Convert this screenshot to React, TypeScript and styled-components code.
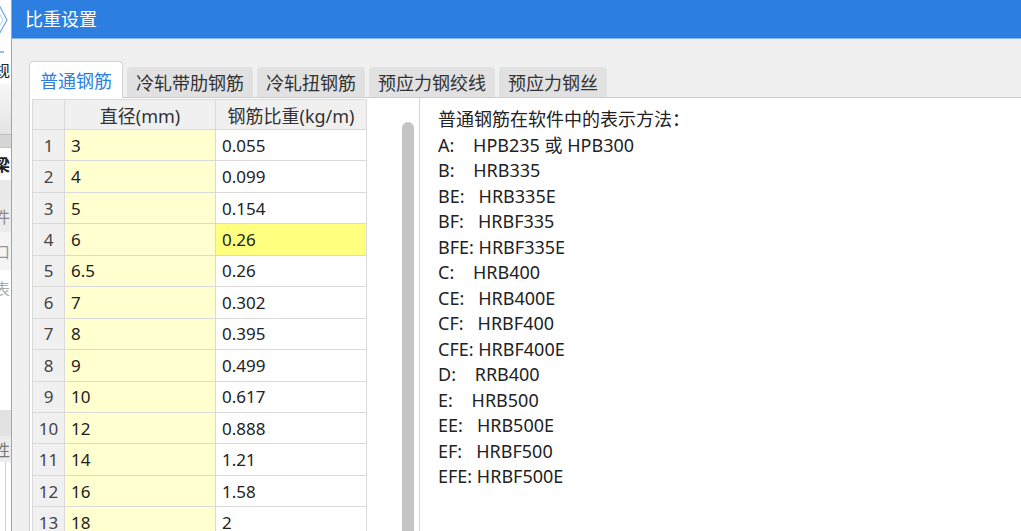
import React from "react";
import styled, { createGlobalStyle } from "styled-components";

const GlobalStyle = createGlobalStyle`
  html, body {
    margin: 0;
    padding: 0;
    overflow: hidden;
    background: #fff;
  }
  body {
    font-family: "Noto Sans", "Noto Sans CJK SC", sans-serif;
  }
`;

const Screen = styled.div`
  display: flex;
  width: 1021px;
  height: 531px;
  overflow: hidden;
`;

// sliver of the window behind the dialog
const BackStrip = styled.div`
  width: 11px;
  flex: none;
  display: flex;
  flex-direction: column;
  overflow: hidden;
  background: #fff;
`;

const StripBlock = styled.div<{ $h: number; $bg: string; $color?: string; $bold?: boolean }>`
  height: ${(p) => p.$h}px;
  flex: none;
  display: flex;
  justify-content: flex-end;
  align-items: center;
  padding-right: 1px;
  overflow: hidden;
  white-space: nowrap;
  background: ${(p) => p.$bg};
  color: ${(p) => p.$color || "#222"};
  font-size: 16px;
  font-weight: ${(p) => (p.$bold ? 700 : 400)};
`;

const StripIcon = styled.svg`
  display: block;
  flex: none;
  margin-right: -1px;
`;

const Dialog = styled.div`
  flex: 1;
  min-width: 0;
  display: flex;
  flex-direction: column;
  background: #f0f0f0;
  border-left: 1px solid #a4a4a4;
`;

const TitleBar = styled.div`
  height: 38px;
  flex: none;
  padding-left: 13px;
  background: #2c7fe0;
  border-bottom: 1px solid #86b6ee;
  color: #fff;
  font-size: 18px;
  line-height: 38px;
`;

const Body = styled.div`
  flex: 1;
  min-height: 0;
  display: flex;
  flex-direction: column;
  padding: 22px 0 0 17px;
`;

const TabRow = styled.div`
  height: 37px;
  flex: none;
  display: flex;
  align-items: flex-end;
  gap: 4px;
`;

const Tab = styled.div<{ $active?: boolean }>`
  position: relative;
  z-index: ${(p) => (p.$active ? 1 : 0)};
  height: ${(p) => (p.$active ? 37 : 30)}px;
  margin-bottom: ${(p) => (p.$active ? 0 : 1)}px;
  padding: 0 ${(p) => (p.$active ? 10 : 9)}px 1px;
  box-sizing: border-box;
  display: flex;
  align-items: center;
  border-radius: 4px 4px 0 0;
  border: ${(p) => (p.$active ? "1px solid #d2d2d2" : "none")};
  border-bottom: none;
  background: ${(p) => (p.$active ? "#fff" : "#e1e1e1")};
  color: ${(p) => (p.$active ? "#2c7fe0" : "#333")};
  font-size: 18px;
  white-space: nowrap;
`;

const Panel = styled.div`
  flex: 1;
  min-height: 0;
  margin-top: -1px;
  display: flex;
  background: #fff;
  border-top: 1px solid #cdcdcd;
  border-left: 1px solid #cdcdcd;
`;

const TableArea = styled.div`
  width: 390px;
  flex: none;
  box-sizing: border-box;
  display: flex;
  padding: 1px 0 0 2px;
  overflow: hidden;
  border-right: 1px solid #d6d6d6;
`;

const Grid = styled.div`
  flex: none;
  align-self: flex-start;
  display: grid;
  grid-template-columns: 32px 151px 151px;
  grid-template-rows: 30px;
  grid-auto-rows: 31.45px;
  border-left: 1px solid #d9d9d9;
  border-top: 1px solid #d9d9d9;
`;

type CellKind = "head" | "num" | "dia" | "val" | "hot";

const cellBg: Record<CellKind, string> = {
  head: "#f0f0f0",
  num: "#f0f0f0",
  dia: "#ffffd0",
  val: "#fff",
  hot: "#ffff80",
};

const Cell = styled.div<{ $kind: CellKind }>`
  box-sizing: border-box;
  display: flex;
  align-items: center;
  justify-content: ${(p) => (p.$kind === "head" || p.$kind === "num" ? "center" : "flex-start")};
  padding-left: ${(p) => (p.$kind === "head" || p.$kind === "num" ? 0 : 6)}px;
  border-right: 1px solid #d9d9d9;
  border-bottom: 1px solid #d9d9d9;
  background: ${(p) => cellBg[p.$kind]};
  color: ${(p) => (p.$kind === "num" ? "#444" : p.$kind === "head" ? "#333" : "#222")};
  font-size: ${(p) => (p.$kind === "head" ? 18 : 17)}px;
  white-space: nowrap;
`;

const Gutter = styled.div`
  flex: 1;
  padding: 23px 0 0 35px;
`;

const Thumb = styled.div`
  width: 12px;
  height: 520px;
  border-radius: 6px;
  background: #c4c4c4;
`;

const RightPane = styled.div`
  flex: 1;
  padding: 9px 0 0 18px;
  color: #222;
  font-size: 18px;
  line-height: 25.5px;
`;

const Line = styled.div`
  white-space: pre;
`;

const tabs = ["普通钢筋", "冷轧带肋钢筋", "冷轧扭钢筋", "预应力钢绞线", "预应力钢丝"];

const rows: [string, string][] = [
  ["3", "0.055"],
  ["4", "0.099"],
  ["5", "0.154"],
  ["6", "0.26"],
  ["6.5", "0.26"],
  ["7", "0.302"],
  ["8", "0.395"],
  ["9", "0.499"],
  ["10", "0.617"],
  ["12", "0.888"],
  ["14", "1.21"],
  ["16", "1.58"],
  ["18", "2"],
  ["20", "2.47"],
];

const HOT_ROW = 3;

const notes = [
  "普通钢筋在软件中的表示方法：",
  "A:    HPB235 或 HPB300",
  "B:    HRB335",
  "BE:   HRB335E",
  "BF:   HRBF335",
  "BFE: HRBF335E",
  "C:    HRB400",
  "CE:   HRB400E",
  "CF:   HRBF400",
  "CFE: HRBF400E",
  "D:    RRB400",
  "E:    HRB500",
  "EE:   HRB500E",
  "EF:   HRBF500",
  "EFE: HRBF500E",
];

const Strip = () => (
  <BackStrip>
    <StripBlock $h={56} $bg="#fff">
      <StripIcon width="11" height="56" viewBox="0 0 11 56">
        <polyline points="-2,3 7,20 -2,36" fill="none" stroke="#6aa6e6" strokeWidth="1.2" />
        <polyline points="-5,6 3,20 -5,33" fill="none" stroke="#a9cbef" strokeWidth="1" />
        <line x1="0" y1="52" x2="4" y2="52" stroke="#4a90e2" strokeWidth="1.2" />
      </StripIcon>
    </StripBlock>
    <StripBlock $h={28} $bg="#fff">规</StripBlock>
    <StripBlock $h={50} $bg="linear-gradient(#f7f7f7, #e4e4e4)" />
    <StripBlock $h={14} $bg="linear-gradient(#bdbdbd 0 1px, #d6d6d6 1px 13px, #c4c4c4 13px)" />
    <StripBlock $h={32} $bg="#fff" $bold>
      梁
    </StripBlock>
    <StripBlock $h={20} $bg="#e9e9e9" />
    <StripBlock $h={32} $bg="#ececec" $color="#8a8a8a">
      件
    </StripBlock>
    <StripBlock $h={38} $bg="#f4f4f4" $color="#999">
      口
    </StripBlock>
    <StripBlock $h={35} $bg="#fff" $color="#aaa">
      表
    </StripBlock>
    <StripBlock $h={105} $bg="#fff" />
    <StripBlock $h={26} $bg="#e2e2e2" />
    <StripBlock $h={26} $bg="#ececec" $color="#777">
      性
    </StripBlock>
    <StripBlock $h={69} $bg="linear-gradient(90deg, #fff 0 5px, #d0d0d0 5px 6px, #fff 6px)" />
  </BackStrip>
);

export default function App() {
  return (
    <>
      <GlobalStyle />
      <Screen>
        <Strip />
        <Dialog>
          <TitleBar>比重设置</TitleBar>
          <Body>
            <TabRow>
              {tabs.map((t, i) => (
                <Tab key={t} $active={i === 0}>
                  {t}
                </Tab>
              ))}
            </TabRow>
            <Panel>
              <TableArea>
                <Grid>
                  <Cell $kind="head" />
                  <Cell $kind="head">直径(mm)</Cell>
                  <Cell $kind="head">钢筋比重(kg/m)</Cell>
                  {rows.map(([d, w], i) => (
                    <React.Fragment key={i}>
                      <Cell $kind="num">{i + 1}</Cell>
                      <Cell $kind="dia">{d}</Cell>
                      <Cell $kind={i === HOT_ROW ? "hot" : "val"}>{w}</Cell>
                    </React.Fragment>
                  ))}
                </Grid>
                <Gutter>
                  <Thumb />
                </Gutter>
              </TableArea>
              <RightPane>
                {notes.map((n) => (
                  <Line key={n}>{n}</Line>
                ))}
              </RightPane>
            </Panel>
          </Body>
        </Dialog>
      </Screen>
    </>
  );
}
